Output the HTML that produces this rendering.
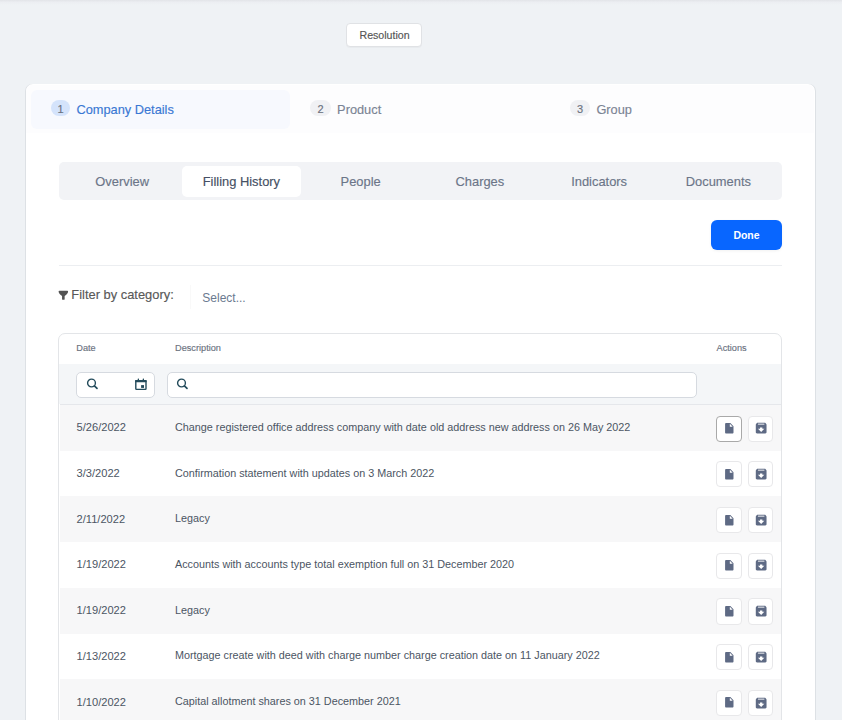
<!DOCTYPE html>
<html><head><meta charset="utf-8"><style>
html,body{margin:0;padding:0;}
body{width:842px;height:720px;overflow:hidden;position:relative;background:#eff2f5;font-family:"Liberation Sans", sans-serif;}
.t{position:absolute;white-space:nowrap;line-height:1;}
.m{-webkit-text-stroke:0.15px currentColor;}
.b{position:absolute;}
</style></head><body>
<div class="b" style="left:0.00px;top:0.00px;width:842.00px;height:5.00px;background:linear-gradient(#e2e4e8,#eceef2 45%,#eff2f5);"></div>
<div class="b" style="left:346.30px;top:23.00px;width:75.40px;height:24.00px;background:#fff;border:1px solid #e0e2e5;border-radius:4px;box-sizing:border-box;box-shadow:0 1px 1px rgba(0,0,0,0.03);"></div>
<div class="t m" style="left:359.50px;top:29.53px;font-size:10.6px;color:#545454;font-weight:normal;">Resolution</div>
<div class="b" style="left:25.60px;top:83.50px;width:789.20px;height:676.50px;background:#fff;border-radius:7px;box-shadow:-1px 0 0 #dde1e5,1px 0 0 #dde1e5;"></div>
<div class="b" style="left:26.00px;top:84.50px;width:788.00px;height:48.50px;background:#fdfdfe;border-radius:6px 6px 0 0;"></div>
<div class="b" style="left:31.00px;top:89.50px;width:259.00px;height:39.30px;background:#f7f9fe;border-radius:6px;"></div>
<div class="b" style="left:51.30px;top:100.10px;width:18.70px;height:16.40px;background:#d4e3fb;border-radius:8px;"></div>
<div class="t m" style="left:-139.35px;width:400px;text-align:center;top:104.29px;font-size:11px;color:#6b7280;font-weight:normal;">1</div>
<div class="t m" style="left:76.40px;top:104.36px;font-size:12.8px;color:#3a78d4;font-weight:normal;">Company Details</div>
<div class="b" style="left:310.30px;top:100.10px;width:20.40px;height:16.40px;background:#f0f1f4;border-radius:8px;"></div>
<div class="t m" style="left:120.50px;width:400px;text-align:center;top:104.29px;font-size:11px;color:#6b7280;font-weight:normal;">2</div>
<div class="t m" style="left:337.10px;top:104.36px;font-size:12.8px;color:#7b8494;font-weight:normal;">Product</div>
<div class="b" style="left:569.90px;top:100.10px;width:20.10px;height:16.40px;background:#f0f1f4;border-radius:8px;"></div>
<div class="t m" style="left:379.95px;width:400px;text-align:center;top:104.29px;font-size:11px;color:#6b7280;font-weight:normal;">3</div>
<div class="t m" style="left:596.40px;top:104.36px;font-size:12.8px;color:#7b8494;font-weight:normal;">Group</div>
<div class="b" style="left:58.50px;top:162.00px;width:723.50px;height:38.00px;background:#f2f3f6;border-radius:5px;"></div>
<div class="b" style="left:181.75px;top:166.00px;width:119.25px;height:31.00px;background:#fff;border-radius:5px;"></div>
<div class="t m" style="left:-77.88px;width:400px;text-align:center;top:175.88px;font-size:12.9px;color:#6b7588;font-weight:normal;">Overview</div>
<div class="t m" style="left:41.38px;width:400px;text-align:center;top:175.88px;font-size:12.9px;color:#455064;font-weight:normal;">Filling History</div>
<div class="t m" style="left:160.62px;width:400px;text-align:center;top:175.88px;font-size:12.9px;color:#6b7588;font-weight:normal;">People</div>
<div class="t m" style="left:279.88px;width:400px;text-align:center;top:175.88px;font-size:12.9px;color:#6b7588;font-weight:normal;">Charges</div>
<div class="t m" style="left:399.12px;width:400px;text-align:center;top:175.88px;font-size:12.9px;color:#6b7588;font-weight:normal;">Indicators</div>
<div class="t m" style="left:518.38px;width:400px;text-align:center;top:175.88px;font-size:12.9px;color:#6b7588;font-weight:normal;">Documents</div>
<div class="b" style="left:711.00px;top:219.60px;width:71.00px;height:30.80px;background:#0866ff;border-radius:6px;box-shadow:0 1px 3px rgba(0,0,0,0.06);"></div>
<div class="t " style="left:546.50px;width:400px;text-align:center;top:229.61px;font-size:10.5px;color:#fff;font-weight:bold;">Done</div>
<div class="b" style="left:58.50px;top:264.80px;width:723.50px;height:1.00px;background:#eceef1;"></div>
<svg class="b" style="left:56px;top:287px" width="16" height="16" viewBox="0 0 16 16"><path d="M3.4 3.75H11.3Q12.2 3.75 12.1 4.7C12.0 6.6 9.8 8.0 8.65 8.9V12.3Q8.65 12.85 7.35 12.85Q6.05 12.85 6.05 12.3V8.9C4.9 8.0 2.7 6.6 2.6 4.7Q2.5 3.75 3.4 3.75Z" fill="#535353"/></svg>
<div class="t m" style="left:71.30px;top:288.88px;font-size:12.9px;color:#585858;font-weight:normal;">Filter by category:</div>
<div class="b" style="left:189.50px;top:284.50px;width:1.00px;height:24.70px;background:#f9f9f9;"></div>
<div class="t " style="left:202.30px;top:291.84px;font-size:12px;color:#6b7a90;font-weight:normal;">Select...</div>
<div class="b" style="left:58.00px;top:332.50px;width:724.00px;height:467.50px;border:1px solid #e3e5e8;border-radius:7px;box-sizing:border-box;background:#fff;"></div>
<div class="t m" style="left:76.30px;top:343.91px;font-size:9.2px;color:#6b7280;font-weight:normal;">Date</div>
<div class="t m" style="left:175.00px;top:343.91px;font-size:9.2px;color:#6b7280;font-weight:normal;">Description</div>
<div class="t m" style="left:716.50px;top:343.91px;font-size:9.2px;color:#6b7280;font-weight:normal;">Actions</div>
<div class="b" style="left:59.00px;top:364.00px;width:722.00px;height:40.00px;background:#f4f6f8;"></div>
<div class="b" style="left:59.50px;top:404.00px;width:721.00px;height:1.00px;background:#e5e7eb;"></div>
<div class="b" style="left:76.30px;top:372.30px;width:79.10px;height:25.50px;background:#fff;border:1px solid #d6dae0;border-radius:5px;box-sizing:border-box;"></div>
<div class="b" style="left:167.10px;top:372.30px;width:529.50px;height:25.50px;background:#fff;border:1px solid #d6dae0;border-radius:5px;box-sizing:border-box;"></div>
<svg class="b" style="left:84px;top:374px" width="20" height="20" viewBox="0 0 20 20"><circle cx="7.5" cy="9" r="3.9" fill="none" stroke="#234b5b" stroke-width="1.4"/><path d="M10.4 11.9L13.0 14.4" stroke="#234b5b" stroke-width="1.7" stroke-linecap="round"/></svg>
<svg class="b" style="left:173.6px;top:374px" width="20" height="20" viewBox="0 0 20 20"><circle cx="7.5" cy="9" r="3.9" fill="none" stroke="#234b5b" stroke-width="1.4"/><path d="M10.4 11.9L13.0 14.4" stroke="#234b5b" stroke-width="1.7" stroke-linecap="round"/></svg>
<svg class="b" style="left:130px;top:374px" width="20" height="20" viewBox="0 0 20 20"><rect x="5.8" y="6.7" width="10.2" height="8.7" rx="0.7" fill="none" stroke="#234b5b" stroke-width="1.4"/><rect x="5.1" y="6" width="11.6" height="2.3" rx="0.7" fill="#234b5b"/><rect x="7.7" y="4.6" width="1.3" height="2" rx="0.4" fill="#234b5b"/><rect x="12.7" y="4.6" width="1.3" height="2" rx="0.4" fill="#234b5b"/><rect x="11.1" y="11.1" width="2.9" height="2.8" fill="#234b5b"/></svg>
<div class="b" style="left:59.50px;top:405.00px;width:721.00px;height:45.72px;background:#f7f7f8;"></div>
<div class="t " style="left:76.60px;top:422.20px;font-size:11.1px;color:#4b5563;font-weight:normal;">5/26/2022</div>
<div class="t " style="left:175.00px;top:421.86px;font-size:10.8px;color:#4b5563;font-weight:normal;">Change registered office address company with date old address new address on 26 May 2022</div>
<div class="b" style="left:716.00px;top:415.50px;width:26.00px;height:26.20px;background:#fff;border:1.7px solid #a9a9a9;border-radius:4px;box-sizing:border-box;"></div>
<div class="b" style="left:748.45px;top:415.50px;width:24.95px;height:26.20px;background:#fff;border:1.5px solid #e8e8ea;border-radius:4px;box-sizing:border-box;"></div>
<svg class="b" style="left:722.60px;top:422.15px" width="12.6" height="12.6" viewBox="0 0 24 24"><path d="M6 2c-1.1 0-1.99.9-1.99 2L4 20c0 1.1.89 2 1.99 2H18c1.1 0 2-.9 2-2V8l-6-6H6zm7 7V3.5L18.5 9H13z" fill="#5e6a84"/></svg>
<svg class="b" style="left:754.00px;top:421.30px" width="14.33" height="14.33" viewBox="0 0 24 24"><path d="M20.54 5.23l-1.39-1.68C18.88 3.21 18.47 3 18 3H6c-.47 0-.88.21-1.16.55L3.46 5.23C3.17 5.57 3 6.02 3 6.5V19c0 1.1.9 2 2 2h14c1.1 0 2-.9 2-2V6.5c0-.48-.17-.93-.46-1.27zM12 18.3L6.6 12.9H10v-2.2h4v2.2h3.4L12 18.3z" fill="#5e6a84"/><rect x="6.6" y="4.5" width="10.8" height="1.5" fill="#fff"/></svg>
<div class="t " style="left:76.60px;top:467.92px;font-size:11.1px;color:#4b5563;font-weight:normal;">3/3/2022</div>
<div class="t " style="left:175.00px;top:467.58px;font-size:10.8px;color:#4b5563;font-weight:normal;">Confirmation statement with updates on 3 March 2022</div>
<div class="b" style="left:716.00px;top:461.22px;width:26.00px;height:26.20px;background:#fff;border:1.5px solid #e8e8ea;border-radius:4px;box-sizing:border-box;"></div>
<div class="b" style="left:748.45px;top:461.22px;width:24.95px;height:26.20px;background:#fff;border:1.5px solid #e8e8ea;border-radius:4px;box-sizing:border-box;"></div>
<svg class="b" style="left:722.60px;top:467.87px" width="12.6" height="12.6" viewBox="0 0 24 24"><path d="M6 2c-1.1 0-1.99.9-1.99 2L4 20c0 1.1.89 2 1.99 2H18c1.1 0 2-.9 2-2V8l-6-6H6zm7 7V3.5L18.5 9H13z" fill="#5e6a84"/></svg>
<svg class="b" style="left:754.00px;top:467.02px" width="14.33" height="14.33" viewBox="0 0 24 24"><path d="M20.54 5.23l-1.39-1.68C18.88 3.21 18.47 3 18 3H6c-.47 0-.88.21-1.16.55L3.46 5.23C3.17 5.57 3 6.02 3 6.5V19c0 1.1.9 2 2 2h14c1.1 0 2-.9 2-2V6.5c0-.48-.17-.93-.46-1.27zM12 18.3L6.6 12.9H10v-2.2h4v2.2h3.4L12 18.3z" fill="#5e6a84"/><rect x="6.6" y="4.5" width="10.8" height="1.5" fill="#fff"/></svg>
<div class="b" style="left:59.50px;top:496.44px;width:721.00px;height:45.72px;background:#f7f7f8;"></div>
<div class="t " style="left:76.60px;top:513.64px;font-size:11.1px;color:#4b5563;font-weight:normal;">2/11/2022</div>
<div class="t " style="left:175.00px;top:513.30px;font-size:10.8px;color:#4b5563;font-weight:normal;">Legacy</div>
<div class="b" style="left:716.00px;top:506.94px;width:26.00px;height:26.20px;background:#fff;border:1.5px solid #e8e8ea;border-radius:4px;box-sizing:border-box;"></div>
<div class="b" style="left:748.45px;top:506.94px;width:24.95px;height:26.20px;background:#fff;border:1.5px solid #e8e8ea;border-radius:4px;box-sizing:border-box;"></div>
<svg class="b" style="left:722.60px;top:513.59px" width="12.6" height="12.6" viewBox="0 0 24 24"><path d="M6 2c-1.1 0-1.99.9-1.99 2L4 20c0 1.1.89 2 1.99 2H18c1.1 0 2-.9 2-2V8l-6-6H6zm7 7V3.5L18.5 9H13z" fill="#5e6a84"/></svg>
<svg class="b" style="left:754.00px;top:512.74px" width="14.33" height="14.33" viewBox="0 0 24 24"><path d="M20.54 5.23l-1.39-1.68C18.88 3.21 18.47 3 18 3H6c-.47 0-.88.21-1.16.55L3.46 5.23C3.17 5.57 3 6.02 3 6.5V19c0 1.1.9 2 2 2h14c1.1 0 2-.9 2-2V6.5c0-.48-.17-.93-.46-1.27zM12 18.3L6.6 12.9H10v-2.2h4v2.2h3.4L12 18.3z" fill="#5e6a84"/><rect x="6.6" y="4.5" width="10.8" height="1.5" fill="#fff"/></svg>
<div class="t " style="left:76.60px;top:559.36px;font-size:11.1px;color:#4b5563;font-weight:normal;">1/19/2022</div>
<div class="t " style="left:175.00px;top:559.02px;font-size:10.8px;color:#4b5563;font-weight:normal;">Accounts with accounts type total exemption full on 31 December 2020</div>
<div class="b" style="left:716.00px;top:552.66px;width:26.00px;height:26.20px;background:#fff;border:1.5px solid #e8e8ea;border-radius:4px;box-sizing:border-box;"></div>
<div class="b" style="left:748.45px;top:552.66px;width:24.95px;height:26.20px;background:#fff;border:1.5px solid #e8e8ea;border-radius:4px;box-sizing:border-box;"></div>
<svg class="b" style="left:722.60px;top:559.31px" width="12.6" height="12.6" viewBox="0 0 24 24"><path d="M6 2c-1.1 0-1.99.9-1.99 2L4 20c0 1.1.89 2 1.99 2H18c1.1 0 2-.9 2-2V8l-6-6H6zm7 7V3.5L18.5 9H13z" fill="#5e6a84"/></svg>
<svg class="b" style="left:754.00px;top:558.46px" width="14.33" height="14.33" viewBox="0 0 24 24"><path d="M20.54 5.23l-1.39-1.68C18.88 3.21 18.47 3 18 3H6c-.47 0-.88.21-1.16.55L3.46 5.23C3.17 5.57 3 6.02 3 6.5V19c0 1.1.9 2 2 2h14c1.1 0 2-.9 2-2V6.5c0-.48-.17-.93-.46-1.27zM12 18.3L6.6 12.9H10v-2.2h4v2.2h3.4L12 18.3z" fill="#5e6a84"/><rect x="6.6" y="4.5" width="10.8" height="1.5" fill="#fff"/></svg>
<div class="b" style="left:59.50px;top:587.88px;width:721.00px;height:45.72px;background:#f7f7f8;"></div>
<div class="t " style="left:76.60px;top:605.08px;font-size:11.1px;color:#4b5563;font-weight:normal;">1/19/2022</div>
<div class="t " style="left:175.00px;top:604.74px;font-size:10.8px;color:#4b5563;font-weight:normal;">Legacy</div>
<div class="b" style="left:716.00px;top:598.38px;width:26.00px;height:26.20px;background:#fff;border:1.5px solid #e8e8ea;border-radius:4px;box-sizing:border-box;"></div>
<div class="b" style="left:748.45px;top:598.38px;width:24.95px;height:26.20px;background:#fff;border:1.5px solid #e8e8ea;border-radius:4px;box-sizing:border-box;"></div>
<svg class="b" style="left:722.60px;top:605.03px" width="12.6" height="12.6" viewBox="0 0 24 24"><path d="M6 2c-1.1 0-1.99.9-1.99 2L4 20c0 1.1.89 2 1.99 2H18c1.1 0 2-.9 2-2V8l-6-6H6zm7 7V3.5L18.5 9H13z" fill="#5e6a84"/></svg>
<svg class="b" style="left:754.00px;top:604.18px" width="14.33" height="14.33" viewBox="0 0 24 24"><path d="M20.54 5.23l-1.39-1.68C18.88 3.21 18.47 3 18 3H6c-.47 0-.88.21-1.16.55L3.46 5.23C3.17 5.57 3 6.02 3 6.5V19c0 1.1.9 2 2 2h14c1.1 0 2-.9 2-2V6.5c0-.48-.17-.93-.46-1.27zM12 18.3L6.6 12.9H10v-2.2h4v2.2h3.4L12 18.3z" fill="#5e6a84"/><rect x="6.6" y="4.5" width="10.8" height="1.5" fill="#fff"/></svg>
<div class="t " style="left:76.60px;top:650.80px;font-size:11.1px;color:#4b5563;font-weight:normal;">1/13/2022</div>
<div class="t " style="left:175.00px;top:650.46px;font-size:10.8px;color:#4b5563;font-weight:normal;">Mortgage create with deed with charge number charge creation date on 11 January 2022</div>
<div class="b" style="left:716.00px;top:644.10px;width:26.00px;height:26.20px;background:#fff;border:1.5px solid #e8e8ea;border-radius:4px;box-sizing:border-box;"></div>
<div class="b" style="left:748.45px;top:644.10px;width:24.95px;height:26.20px;background:#fff;border:1.5px solid #e8e8ea;border-radius:4px;box-sizing:border-box;"></div>
<svg class="b" style="left:722.60px;top:650.75px" width="12.6" height="12.6" viewBox="0 0 24 24"><path d="M6 2c-1.1 0-1.99.9-1.99 2L4 20c0 1.1.89 2 1.99 2H18c1.1 0 2-.9 2-2V8l-6-6H6zm7 7V3.5L18.5 9H13z" fill="#5e6a84"/></svg>
<svg class="b" style="left:754.00px;top:649.90px" width="14.33" height="14.33" viewBox="0 0 24 24"><path d="M20.54 5.23l-1.39-1.68C18.88 3.21 18.47 3 18 3H6c-.47 0-.88.21-1.16.55L3.46 5.23C3.17 5.57 3 6.02 3 6.5V19c0 1.1.9 2 2 2h14c1.1 0 2-.9 2-2V6.5c0-.48-.17-.93-.46-1.27zM12 18.3L6.6 12.9H10v-2.2h4v2.2h3.4L12 18.3z" fill="#5e6a84"/><rect x="6.6" y="4.5" width="10.8" height="1.5" fill="#fff"/></svg>
<div class="b" style="left:59.50px;top:679.32px;width:721.00px;height:45.72px;background:#f7f7f8;"></div>
<div class="t " style="left:76.60px;top:696.52px;font-size:11.1px;color:#4b5563;font-weight:normal;">1/10/2022</div>
<div class="t " style="left:175.00px;top:696.18px;font-size:10.8px;color:#4b5563;font-weight:normal;">Capital allotment shares on 31 December 2021</div>
<div class="b" style="left:716.00px;top:689.82px;width:26.00px;height:26.20px;background:#fff;border:1.5px solid #e8e8ea;border-radius:4px;box-sizing:border-box;"></div>
<div class="b" style="left:748.45px;top:689.82px;width:24.95px;height:26.20px;background:#fff;border:1.5px solid #e8e8ea;border-radius:4px;box-sizing:border-box;"></div>
<svg class="b" style="left:722.60px;top:696.47px" width="12.6" height="12.6" viewBox="0 0 24 24"><path d="M6 2c-1.1 0-1.99.9-1.99 2L4 20c0 1.1.89 2 1.99 2H18c1.1 0 2-.9 2-2V8l-6-6H6zm7 7V3.5L18.5 9H13z" fill="#5e6a84"/></svg>
<svg class="b" style="left:754.00px;top:695.62px" width="14.33" height="14.33" viewBox="0 0 24 24"><path d="M20.54 5.23l-1.39-1.68C18.88 3.21 18.47 3 18 3H6c-.47 0-.88.21-1.16.55L3.46 5.23C3.17 5.57 3 6.02 3 6.5V19c0 1.1.9 2 2 2h14c1.1 0 2-.9 2-2V6.5c0-.48-.17-.93-.46-1.27zM12 18.3L6.6 12.9H10v-2.2h4v2.2h3.4L12 18.3z" fill="#5e6a84"/><rect x="6.6" y="4.5" width="10.8" height="1.5" fill="#fff"/></svg>
</body></html>
